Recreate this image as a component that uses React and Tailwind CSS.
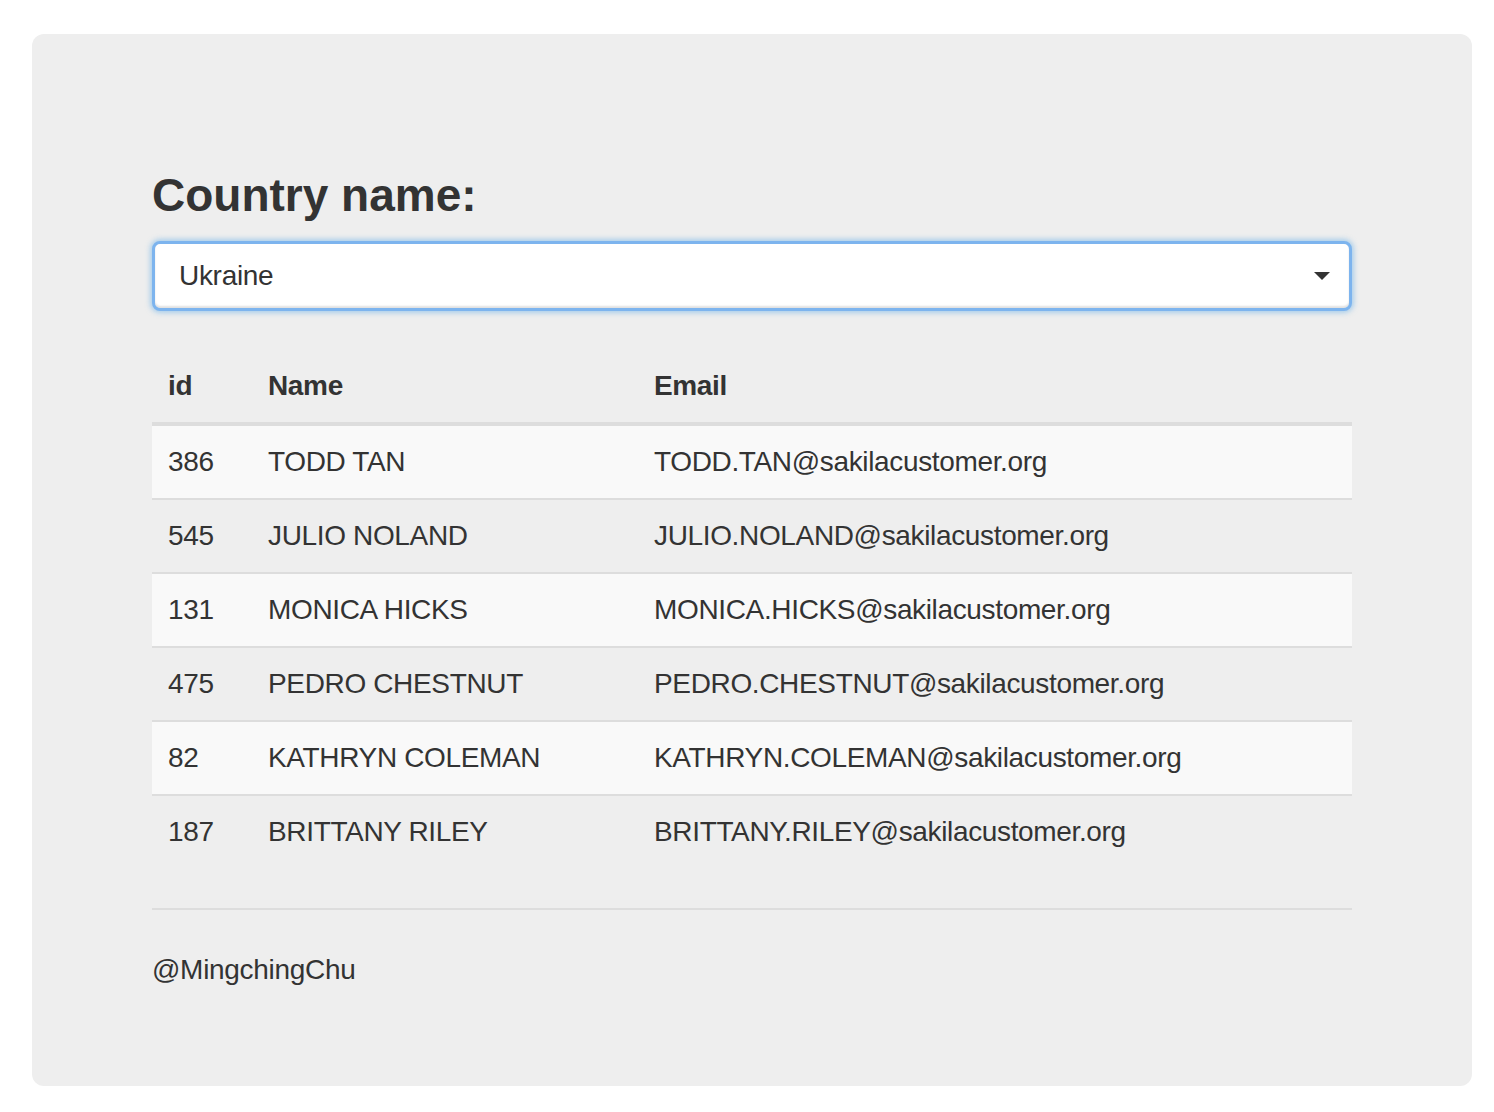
import React, { useState } from 'react';

const customers = [
  { id: 386, name: 'TODD TAN', email: 'TODD.TAN@sakilacustomer.org' },
  { id: 545, name: 'JULIO NOLAND', email: 'JULIO.NOLAND@sakilacustomer.org' },
  { id: 131, name: 'MONICA HICKS', email: 'MONICA.HICKS@sakilacustomer.org' },
  { id: 475, name: 'PEDRO CHESTNUT', email: 'PEDRO.CHESTNUT@sakilacustomer.org' },
  { id: 82, name: 'KATHRYN COLEMAN', email: 'KATHRYN.COLEMAN@sakilacustomer.org' },
  { id: 187, name: 'BRITTANY RILEY', email: 'BRITTANY.RILEY@sakilacustomer.org' },
];

const App = () => {
  const [country, setCountry] = useState('Ukraine');

  return (
    <div className="min-h-screen bg-white font-['Liberation_Sans',Arial,sans-serif] text-[#333]">
      <div className="ml-[32px] mt-[34px] w-[1440px] rounded-[12px] bg-[#eee] px-[120px] pb-[96px] pt-[136px]">
        <h3 className="m-0 text-[46px] font-bold leading-[1.1]">Country name:</h3>

        {/* Country select */}
        <div className="relative mt-[20px]">
          <select
            value={country}
            onChange={(e) => setCountry(e.target.value)}
            className="block h-[70px] w-full appearance-none rounded-[8px] border-[3px] border-[#7db4ee] bg-white pl-[24px] text-[28px] leading-[40px] tracking-[-0.3px] text-[#333] shadow-[0_0_5px_2px_rgba(102,175,233,0.5),inset_0_-2px_2px_rgba(0,0,0,0.12)] outline-none"
          >
            <option>Ukraine</option>
            <option>Poland</option>
            <option>Canada</option>
          </select>
          <svg
            className="pointer-events-none absolute right-[22px] top-[31px]"
            width="16"
            height="8"
            viewBox="0 0 16 8"
          >
            <path d="M0 0h16L8 8z" fill="#333" />
          </svg>
        </div>

        {/* Customers table */}
        <table className="mt-[39px] w-full table-fixed border-collapse text-[28px] leading-[40px] tracking-[-0.35px]">
          <colgroup>
            <col className="w-[100px]" />
            <col className="w-[386px]" />
            <col />
          </colgroup>
          <thead>
            <tr>
              <th className="border-b-4 border-[#ddd] p-[16px] text-left font-bold">id</th>
              <th className="border-b-4 border-[#ddd] p-[16px] text-left font-bold">Name</th>
              <th className="border-b-4 border-[#ddd] p-[16px] text-left font-bold">Email</th>
            </tr>
          </thead>
          <tbody>
            {customers.map((c, i) => (
              <tr key={c.id} className={i % 2 === 0 ? 'bg-[#f9f9f9]' : ''}>
                <td className={`p-[16px] ${i > 0 ? 'border-t-2 border-[#ddd]' : ''}`}>{c.id}</td>
                <td className={`p-[16px] ${i > 0 ? 'border-t-2 border-[#ddd]' : ''}`}>{c.name}</td>
                <td className={`p-[16px] ${i > 0 ? 'border-t-2 border-[#ddd]' : ''}`}>{c.email}</td>
              </tr>
            ))}
          </tbody>
        </table>

        <hr className="mt-[40px] mb-[40px] border-0 border-t-2 border-[#ddd]" />

        <p className="m-0 text-[28px] leading-[40px] tracking-[-0.3px]">@MingchingChu</p>
      </div>
    </div>
  );
};

export default App;
